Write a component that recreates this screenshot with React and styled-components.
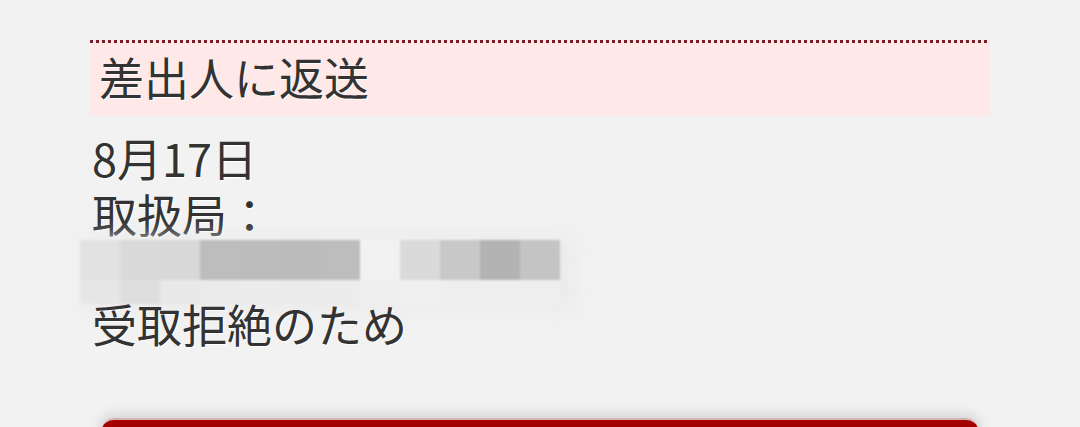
import React from 'react';
import styled, { createGlobalStyle } from 'styled-components';

const GlobalStyle = createGlobalStyle`
  html, body {
    margin: 0;
    padding: 0;
    background: #f2f2f2;
    overflow: hidden;
  }
  body {
    font-family: "Noto Sans CJK JP", "Noto Sans", sans-serif;
    color: #333;
  }
`;

// blurred-out office name, one colour per 40px cell
const mosaicRows = [
  ['#e2e2e2', '#dadada', '#d8d8d8', '#bdbdbd', '#bcbcbc', '#bbbbbb', '#bdbdbd', '#f2f2f2', '#dadada', '#c8c8c8', '#b3b3b3', '#c4c4c4'],
  ['#e6e6e6', '#dedede', '#e8e8e8', '#ebebeb', '#ececec', '#ebebeb', '#ececec', '#efefef', '#f0f0f0', '#eeeeee', '#efefef', '#eeeeee'],
];

const App = () => {
  return (
    <Page>
      <GlobalStyle />
      <StatusHeader>
        <h2>差出人に返送</h2>
      </StatusHeader>
      <Details>
        <Line>8月17日</Line>
        <Line>取扱局：</Line>
        <MaskedLine>
          <Mosaic>
            {mosaicRows.map((row, r) =>
              row.map((c, i) => <Cell key={r + '-' + i} $color={c} />)
            )}
          </Mosaic>
        </MaskedLine>
        <Line $front>受取拒絶のため</Line>
      </Details>
      <ActionButton />
    </Page>
  );
};

export default App;

const Page = styled.div`
  display: flex;
  flex-direction: column;
  padding: 40px 90px 0 90px;
  & > * {
    flex-shrink: 0;
  }
`;

const StatusHeader = styled.div`
  padding-top: 3px;
  background-color: #ffe8e8;
  /* square dotted rule along the top */
  background-image: repeating-linear-gradient(90deg, #7b1f27 0 3px, transparent 3px 6px);
  background-size: 100% 3px;
  background-repeat: no-repeat;
  height: 73px;
  display: flex;
  align-items: center;
  padding-left: 9px;
  h2 {
    margin: 0;
    font-weight: 400;
    font-size: 45px;
    line-height: 56px;
    color: #333;
    text-shadow: 1px 1px 0 #fff;
    position: relative;
    top: -3px;
  }
`;

const Details = styled.div`
  margin-top: 14px;
  padding-left: 2px;
  font-size: 45px;
  line-height: 56px;
  text-shadow: 1px 1px 0 #fff;
`;

const Line = styled.div`
  height: 56px;
  white-space: nowrap;
  position: ${({ $front }) => ($front ? 'relative' : 'static')};
`;

const MaskedLine = styled.div`
  height: 56px;
`;

const Mosaic = styled.div`
  display: grid;
  grid-template-columns: repeat(12, 40px);
  grid-template-rows: 40px 24px;
  margin-left: -12px;
  margin-top: -2px;
  filter: blur(1.2px);
  box-shadow: 10px 2px 18px 4px rgba(232, 232, 232, 0.8);
  width: 480px;
`;

const Cell = styled.div`
  background: ${({ $color }) => $color};
`;

const ActionButton = styled.div`
  margin: 66px 12px 0 12px;
  height: 60px;
  background: #a30000;
  border-top: 2px solid #d9b4b4;
  border-radius: 12px;
  box-shadow: 0 -2px 10px 3px rgba(200, 200, 200, 0.6);
`;
